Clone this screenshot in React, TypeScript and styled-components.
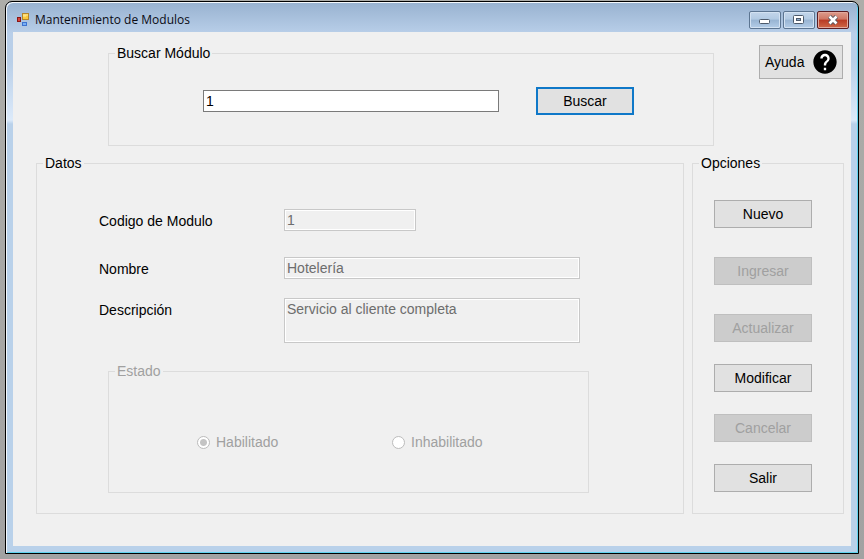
import React from 'react';
import styled, { createGlobalStyle, css } from 'styled-components';
import { MdHelp } from 'react-icons/md';

const GlobalStyle = createGlobalStyle`
  *, *::before, *::after { box-sizing: border-box; }
  body { margin: 0; background: #a8a8a8; }
  body, button, input, textarea { font-family: "Liberation Sans", Arial, sans-serif; font-size: 14px; }
`;

const Desktop = styled.div`
  min-height: 100vh;
  padding: 1px 5px 5px;
  background: linear-gradient(#adada9, #a2a2a2);
`;

const Window = styled.main`
  border: 1px solid #000;
  border-radius: 7px 7px 0 0;
  padding: 0 7px 7px;
  background:
    linear-gradient(#98b2d0 0, #b9cfe9 32px, #b9cfe8 60px, #dceafa 118px, #b9d1ea 122px, #b9d1ea 100%);
  box-shadow: inset 1px 1px 0 #f4f8fc, inset -1px -1px 0 #5fd3ef;
`;

const TitleBar = styled.header`
  display: flex;
  align-items: center;
  height: 30px;
  padding: 6px 2px 0 3px;
`;

const Title = styled.h1`
  flex: 1;
  margin: 0 0 0 5px;
  font: 400 12px/18px "Open Sans", sans-serif;
  color: #0b0b14;
`;

const Controls = styled.div`
  display: flex;
  gap: 2px;
`;

const ControlButton = styled.button<{ $danger?: boolean }>`
  display: flex;
  align-items: center;
  justify-content: center;
  width: 32px;
  height: 18px;
  padding: 0;
  border: 1px solid ${p => (p.$danger ? '#5c1d22' : '#5c7591')};
  border-radius: 2px;
  background: ${p =>
    p.$danger
      ? 'linear-gradient(#dd9c8c 0, #cf7664 45%, #b83a24 50%, #cf6848 100%)'
      : 'linear-gradient(#c3d6ea 0, #b2cae3 45%, #98b4d2 50%, #b4cde8 100%)'};
  box-shadow: inset 0 0 0 1px ${p => (p.$danger ? '#e2a99d' : '#d3e2f2')};
`;

const Body = styled.div`
  display: flex;
  flex-direction: column;
  gap: 8px;
  padding: 12px 7px 32px 23px;
  background: #f0f0f0;
`;

const TopRow = styled.div`
  display: flex;
  align-items: flex-start;
  gap: 45px;
  padding: 0 1px 0 72px;
`;

const MainRow = styled.div`
  display: flex;
  gap: 8px;
`;

const Group = styled.fieldset`
  min-width: 0;
  margin: 0;
  padding: 0;
  border: 1px solid #dcdcdc;
  color: #000;
  &:disabled { color: #a0a0a0; }
`;

const GroupTitle = styled.legend`
  margin-left: 6px;
  padding: 1px 2px 0;
  line-height: 17px;
`;

const SearchGroup = styled(Group)`
  flex: 1;
`;

const SearchForm = styled.form`
  display: flex;
  align-items: center;
  gap: 37px;
  padding: 25px 79px 30px 94px;
`;

const fieldStyle = css`
  display: block;
  width: 100%;
  margin: 0;
  padding: 0 2px;
  border: 1px solid #7a7a7a;
  border-radius: 0;
  outline: 0;
  background: #fff;
  color: #000;
  line-height: 20px;
  &:disabled {
    border-color: #c8c8c8;
    background: #f0f0f0;
    box-shadow: inset 0 0 0 1px #fff;
    color: #6d6d6d;
  }
`;

const TextInput = styled.input`
  ${fieldStyle}
  height: 22px;
`;

const TextArea = styled.textarea`
  ${fieldStyle}
  height: 45px;
  resize: none;
`;

const Button = styled.button<{ $primary?: boolean }>`
  flex: none;
  width: 98px;
  height: 28px;
  padding: 0;
  border: ${p => (p.$primary ? '2px solid #0f78c8' : '1px solid #adadad')};
  border-radius: 0;
  background: #e1e1e1;
  color: #000;
  &:disabled {
    border-color: #bfbfbf;
    background: #ccc;
    color: #a0a0a0;
  }
`;

const HelpButton = styled(Button)`
  display: flex;
  align-items: center;
  justify-content: space-between;
  width: 84px;
  height: 34px;
  margin-top: 1px;
  padding: 0 3px 0 5px;
`;

const HelpIcon = styled(MdHelp)`
  width: 28px;
  height: 28px;
  background: radial-gradient(circle, #fff 10px, transparent 11px);
`;

const DataGroup = styled(Group)`
  flex: 1;
`;

const DataFields = styled.div`
  display: flex;
  flex-direction: column;
  gap: 19px;
  padding: 37px 94px 20px 62px;
`;

const FieldRow = styled.div<{ $spaced?: boolean }>`
  display: grid;
  grid-template-columns: 185px minmax(0, 296px);
  margin-bottom: ${p => (p.$spaced ? '7px' : '0')};
`;

const FieldLabel = styled.label`
  height: 22px;
  line-height: 24px;
`;

const CodeSlot = styled.div`
  max-width: 132px;
`;

const StatusGroup = styled(Group)`
  margin-left: 9px;
`;

const StatusOptions = styled.div`
  display: grid;
  grid-template-columns: 195px 1fr;
  padding: 52px 0 40px 88px;
`;

const RadioLabel = styled.label`
  display: flex;
  align-items: center;
  gap: 6px;
  height: 20px;
`;

const Radio = styled.input`
  appearance: none;
  width: 13px;
  height: 13px;
  margin: 0;
  border: 1px solid #bcbcbc;
  border-radius: 50%;
  background: #fff;
  &:checked { background: radial-gradient(circle, #c4c4c4 3px, #fff 4px); }
`;

const ActionsGroup = styled(Group)`
  width: 152px;
`;

const Actions = styled.div`
  display: flex;
  flex-direction: column;
  gap: 22px;
  padding: 28px 21px 21px;
`;

const ActionSet = styled.div`
  display: flex;
  flex-direction: column;
  gap: 29px;
`;

const FormIcon = () => (
  <svg width="14" height="14" viewBox="0 0 14 14" aria-hidden="true">
    <rect x="1.5" y="4.5" width="3" height="4" fill="#d8433c" stroke="#8a1613" />
    <rect x="6.5" y="0.5" width="6" height="6" fill="#fbc93c" stroke="#b5862a" />
    <path d="M7 2h5M7 3h3" stroke="#ffeda0" />
    <rect x="6.5" y="9.5" width="4" height="3" fill="#78b0f5" stroke="#3d73d0" />
  </svg>
);

const MinimizeIcon = () => (
  <svg width="12" height="10" viewBox="0 0 12 10" aria-hidden="true">
    <rect x="0.5" y="4.5" width="10" height="4" rx="1" fill="#fff" stroke="#4d5a6b" />
  </svg>
);

const MaximizeIcon = () => (
  <svg width="12" height="10" viewBox="0 0 12 10" aria-hidden="true">
    <rect x="0.5" y="0.5" width="10" height="8" rx="1" fill="#fff" stroke="#4d5a6b" />
    <rect x="3.5" y="3.5" width="4" height="2" fill="#8faccb" stroke="#4d5a6b" />
  </svg>
);

const CloseIcon = () => (
  <svg width="12" height="10" viewBox="0 0 12 10" aria-hidden="true">
    <path d="M2.5 1.5l7 7M9.5 1.5l-7 7" stroke="#55565f" strokeWidth="4.4" />
    <path d="M2.5 1.5l7 7M9.5 1.5l-7 7" stroke="#fff" strokeWidth="2.6" />
  </svg>
);

export default function App() {
  return (
    <>
      <GlobalStyle />
      <Desktop>
        <Window>
          <TitleBar>
            <FormIcon />
            <Title>Mantenimiento de Modulos</Title>
            <Controls>
              <ControlButton type="button" aria-label="Minimizar"><MinimizeIcon /></ControlButton>
              <ControlButton type="button" aria-label="Maximizar"><MaximizeIcon /></ControlButton>
              <ControlButton type="button" aria-label="Cerrar" $danger><CloseIcon /></ControlButton>
            </Controls>
          </TitleBar>
          <Body>
            <TopRow>
              <SearchGroup>
                <GroupTitle>Buscar Módulo</GroupTitle>
                <SearchForm onSubmit={e => e.preventDefault()}>
                  <TextInput type="text" aria-label="Buscar Módulo" defaultValue="1" />
                  <Button type="submit" $primary>Buscar</Button>
                </SearchForm>
              </SearchGroup>
              <HelpButton type="button">Ayuda<HelpIcon aria-hidden="true" /></HelpButton>
            </TopRow>
            <MainRow>
              <DataGroup>
                <GroupTitle>Datos</GroupTitle>
                <DataFields>
                  <FieldRow $spaced>
                    <FieldLabel htmlFor="codigo">Codigo de Modulo</FieldLabel>
                    <CodeSlot><TextInput id="codigo" type="text" defaultValue="1" disabled /></CodeSlot>
                  </FieldRow>
                  <FieldRow>
                    <FieldLabel htmlFor="nombre">Nombre</FieldLabel>
                    <TextInput id="nombre" type="text" defaultValue="Hotelería" disabled />
                  </FieldRow>
                  <FieldRow>
                    <FieldLabel htmlFor="descripcion">Descripción</FieldLabel>
                    <TextArea id="descripcion" defaultValue="Servicio al cliente completa" disabled />
                  </FieldRow>
                  <StatusGroup disabled>
                    <GroupTitle>Estado</GroupTitle>
                    <StatusOptions>
                      <RadioLabel><Radio type="radio" name="estado" defaultChecked />Habilitado</RadioLabel>
                      <RadioLabel><Radio type="radio" name="estado" />Inhabilitado</RadioLabel>
                    </StatusOptions>
                  </StatusGroup>
                </DataFields>
              </DataGroup>
              <ActionsGroup>
                <GroupTitle>Opciones</GroupTitle>
                <Actions>
                  <ActionSet>
                    <Button type="button">Nuevo</Button>
                    <Button type="button" disabled>Ingresar</Button>
                    <Button type="button" disabled>Actualizar</Button>
                  </ActionSet>
                  <Button type="button">Modificar</Button>
                  <Button type="button" disabled>Cancelar</Button>
                  <Button type="button">Salir</Button>
                </Actions>
              </ActionsGroup>
            </MainRow>
          </Body>
        </Window>
      </Desktop>
    </>
  );
}
